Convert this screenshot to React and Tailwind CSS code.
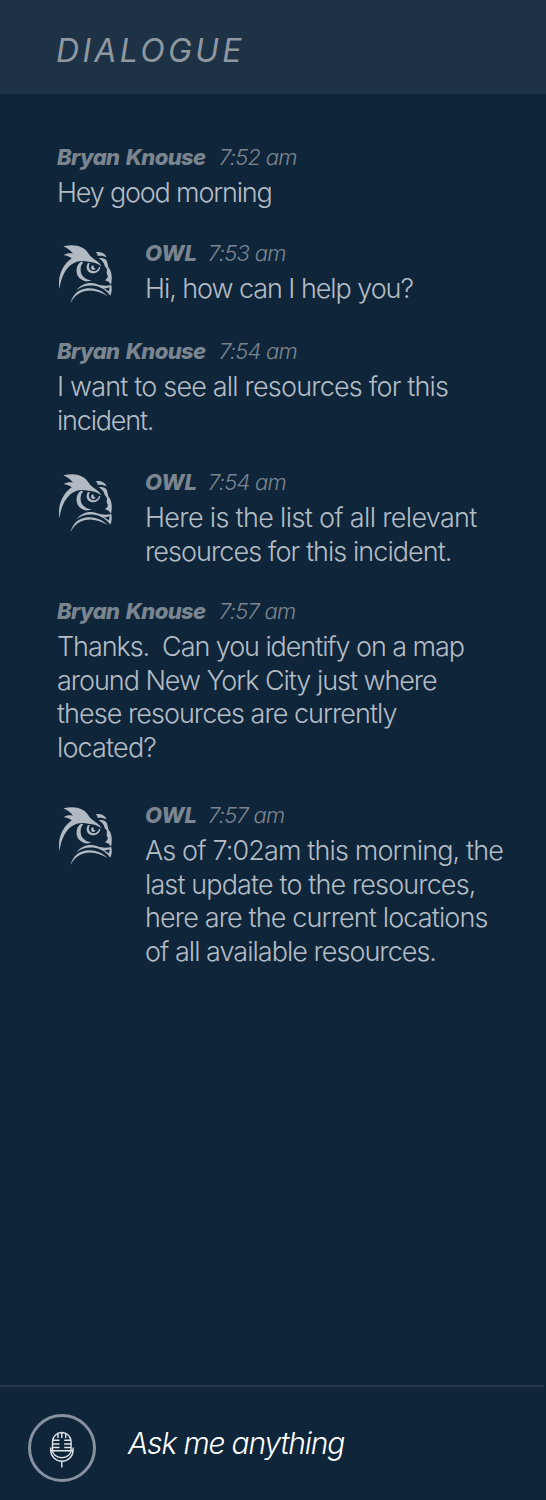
import React from "react";

const messages = [
  { from: "Bryan Knouse", time: "7:52 am", gap: "mt-[46px]", lines: [["Hey good morning", "tracking-[-1.2px]"]] },
  { from: "OWL", time: "7:53 am", owl: true, gap: "mt-[26.5px]", lines: [["Hi, how can I help you?", "tracking-[-1.07px]"]] },
  { from: "Bryan Knouse", time: "7:54 am", gap: "mt-[28.5px]", lines: [["I want to see all resources for this", "tracking-[-0.82px]"], ["incident.", "tracking-[-1.2px]"]] },
  { from: "OWL", time: "7:54 am", owl: true, gap: "mt-[28px]", lines: [["Here is the list of all relevant", "tracking-[-0.67px]"], ["resources for this incident.", "tracking-[-0.95px]"]] },
  { from: "Bryan Knouse", time: "7:57 am", gap: "mt-[26px]", lines: [["Thanks.  Can you identify on a map", "tracking-[-1.08px]"], ["around New York City just where", "tracking-[-1.05px]"], ["these resources are currently", "tracking-[-0.97px]"], ["located?", "tracking-[-0.85px]"]] },
  { from: "OWL", time: "7:57 am", owl: true, gap: "mt-[34px]", lines: [["As of 7:02am this morning, the", "tracking-[-0.87px]"], ["last update to the resources,", "tracking-[-0.88px]"], ["here are the current locations", "tracking-[-0.87px]"], ["of all available resources.", "tracking-[-0.98px]"]] },
];

function Owl() {
  return (
    <svg viewBox="3 0 171 192" className="h-[64px] w-[57px] shrink-0 fill-[#b1bac3]">
      <path d="M22 13C56 4 84 12 98 35C106 50 127 55 137 73C125 64 112 60 97 59C78 54 58 57 43 70C24 88 14 112 11 141C4 114 14 72 47 49C40 44 33 41 23 40C32 33 42 33 51 35C45 26 34 19 22 13Z" />
      <path d="M119 31C134 28 147 34 152 46C143 41 134 40 124 42C126 38 124 35 119 31Z" />
      <path d="M128 49C138 46 147 49 152 56C156 64 154 74 161 82C168 93 169 111 165 129C161 121 156 117 147 115C153 110 157 105 155 100C150 96 154 86 152 79C147 75 145 69 143 63C139 57 134 53 128 49Z" />
      <path d="M75 59C59 68 57 96 71 109C82 119 95 121 107 115C89 113 75 102 74 86C73 75 76 67 82 61Z" />
      <path d="M96 63C88 74 92 89 105 93C118 97 131 89 133 76L129 74C127 84 118 89 109 87C98 84 96 72 102 64Z" />
      <path d="M110 70a7 7 0 1 0 9 8c-4 2-8-1-6-6a7 7 0 0 0-3-2Z" />
      <path d="M61 145C72 130 90 122 107 123C125 124 135 136 166 129C168 139 168 150 163 161C152 147 139 136 119 132C95 128 76 134 61 145Z" />
      <path d="M43 184C50 159 64 144 86 140C112 135 136 143 155 162C132 149 109 142 88 147C66 152 54 164 43 184Z" />
      <path className="fill-[#0f253a]" d="M135 137C145 140 152 140 160 136C161 140 160 144 158 148C151 142 144 139 135 137Z" />
    </svg>
  );
}

function Mic() {
  return (
    <svg viewBox="0 0 26 38" className="h-[38px] w-[26px] overflow-visible fill-none stroke-[#dfe4e8] stroke-[1.4]">
      <path d="M3.500 21V12.500a9.300 9 0 0 1 18.600 0V21a9.300 7.800 0 0 1-18.600 0ZM1.700 18.500v2.500a11.200 11.200 0 0 0 22.400 0v-2.500M1.700 21.700h22.400M12.800 32.500v6M9 4.500v4.500M12.800 3.500v5.500M16.700 4.500v4.500M4 11.300h6.500M4 15h6.500M4 18.500h6.500M15.200 11.300h6.500M15.200 15h6.500M15.200 18.500h6.500" />
    </svg>
  );
}

function Message({ m }) {
  return (
    <article className={`flex ${m.gap}`}>
      {m.owl && (
        <div className="h-[64px] w-[88px] shrink-0 pt-[6px]">
          <Owl />
        </div>
      )}
      <div className="whitespace-pre">
        <div className="flex h-[36px] items-start text-[22px] leading-[35px] italic text-[#7b8590]">
          <span className={m.owl ? "w-[50px] font-extrabold" : "w-[149px] font-extrabold tracking-[-0.6px] [word-spacing:2px]"}>{m.from}</span>
          <span className="ml-[13px] font-light tracking-[-0.75px]">{m.time}</span>
        </div>
        {m.lines.map(([text, tracking]) => (
          <p key={text} className="h-[33.5px] text-[#b4bcc4]">
            <span className={`text-[27px] leading-[33.5px] font-light ${tracking}`}>{text}</span>
          </p>
        ))}
      </div>
    </article>
  );
}

export default function App() {
  return (
    <div className="flex h-[1500px] w-[546px] flex-col overflow-hidden bg-[#0f253a] font-['Inter','Liberation_Sans',sans-serif]">
      <header className="flex h-[94px] shrink-0 items-center bg-[#1e3246] pt-[7px] pl-[56px]">
        <h1 className="text-[32px] leading-[40px] font-normal tracking-[3.3px] italic text-[#8f989f]">DIALOGUE</h1>
      </header>
      <main className="flex-1 pl-[57px]">
        {messages.map((m, i) => (
          <Message key={i} m={m} />
        ))}
      </main>
      <footer className="h-[115px] shrink-0">
        <div className="h-[2px] w-[544px] bg-[#253a50]" />
        <div className="flex items-center pt-[27px] pl-[28px]">
          <div className="flex h-[68px] w-[68px] items-center justify-center rounded-full border-[3px] border-[#8791a0]">
            <Mic />
          </div>
          <span className="mb-[10px] ml-[32px] text-[30px] leading-[40px] font-light tracking-[-1.15px] italic text-white">Ask me anything</span>
        </div>
      </footer>
    </div>
  );
}
